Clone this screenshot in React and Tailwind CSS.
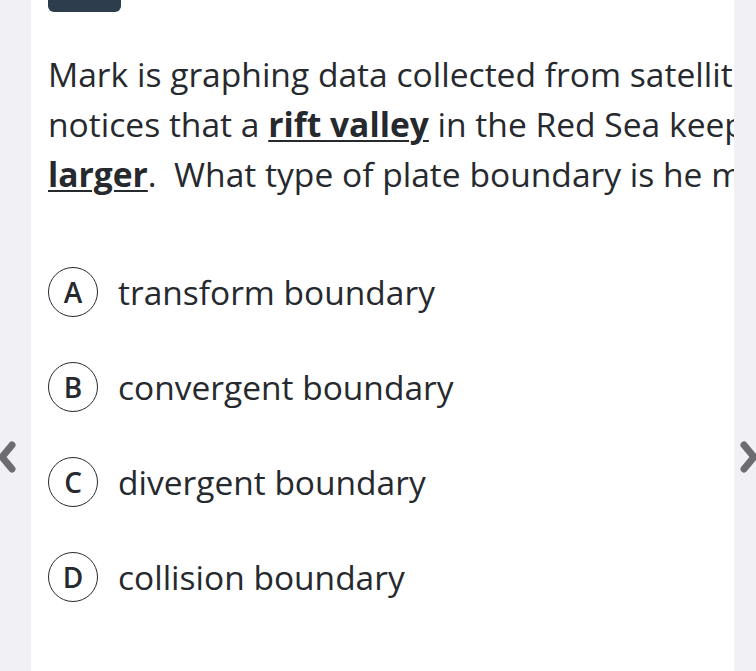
import React from "react";

const options = [
  { letter: "A", text: "transform boundary" },
  { letter: "B", text: "convergent boundary" },
  { letter: "C", text: "divergent boundary" },
  { letter: "D", text: "collision boundary" },
];

function Chevron({ dir }) {
  const d = dir === "left" ? "M14 5 L4 17 L14 29" : "M4 5 L14 17 L4 29";
  return (
    <svg width="18" height="34" viewBox="0 0 18 34" fill="none">
      <path d={d} stroke="#6c6c71" strokeWidth="7" strokeLinecap="round" strokeLinejoin="round" />
    </svg>
  );
}

export default function App() {
  return (
    <div
      className="relative flex h-[671px] w-[756px] overflow-hidden bg-[#f1f1f5] text-[#26292e]"
      style={{ fontFamily: '"Open Sans", "Noto Sans", sans-serif' }}
    >
      <div className="w-[31px] shrink-0" />
      <div className="flex-1 overflow-hidden bg-white pl-[17px]">
        <div className="h-[12px] w-[73px] rounded-b-md bg-[#2e3d4d]" />
        <div className="mt-[37px] whitespace-nowrap text-[33.6px] leading-[50px]">
          <div>Mark is graphing data collected from satellite images. He</div>
          <div>
            notices that a{" "}
            <span className="font-bold underline decoration-2 underline-offset-[3px]">rift valley</span> in the
            Red Sea keeps getting
          </div>
          <div>
            <span className="font-bold underline decoration-2 underline-offset-[3px]">larger</span>.&nbsp; What
            type of plate boundary is he modeling?
          </div>
        </div>
        <div className="mt-[68px] flex flex-col gap-[45px]">
          {options.map((o) => (
            <div key={o.letter} className="flex items-center gap-[20px]">
              <div className="flex h-[50px] w-[50px] shrink-0 items-center justify-center rounded-full border-[1.5px] border-[#26292e] text-[28px] font-semibold">
                {o.letter}
              </div>
              <div className="text-[33.5px] leading-[44px]">{o.text}</div>
            </div>
          ))}
        </div>
      </div>
      <div className="w-[22px] shrink-0" />
      <div className="absolute left-[-2px] top-[440px]">
        <Chevron dir="left" />
      </div>
      <div className="absolute right-[-2px] top-[440px]">
        <Chevron dir="right" />
      </div>
    </div>
  );
}
